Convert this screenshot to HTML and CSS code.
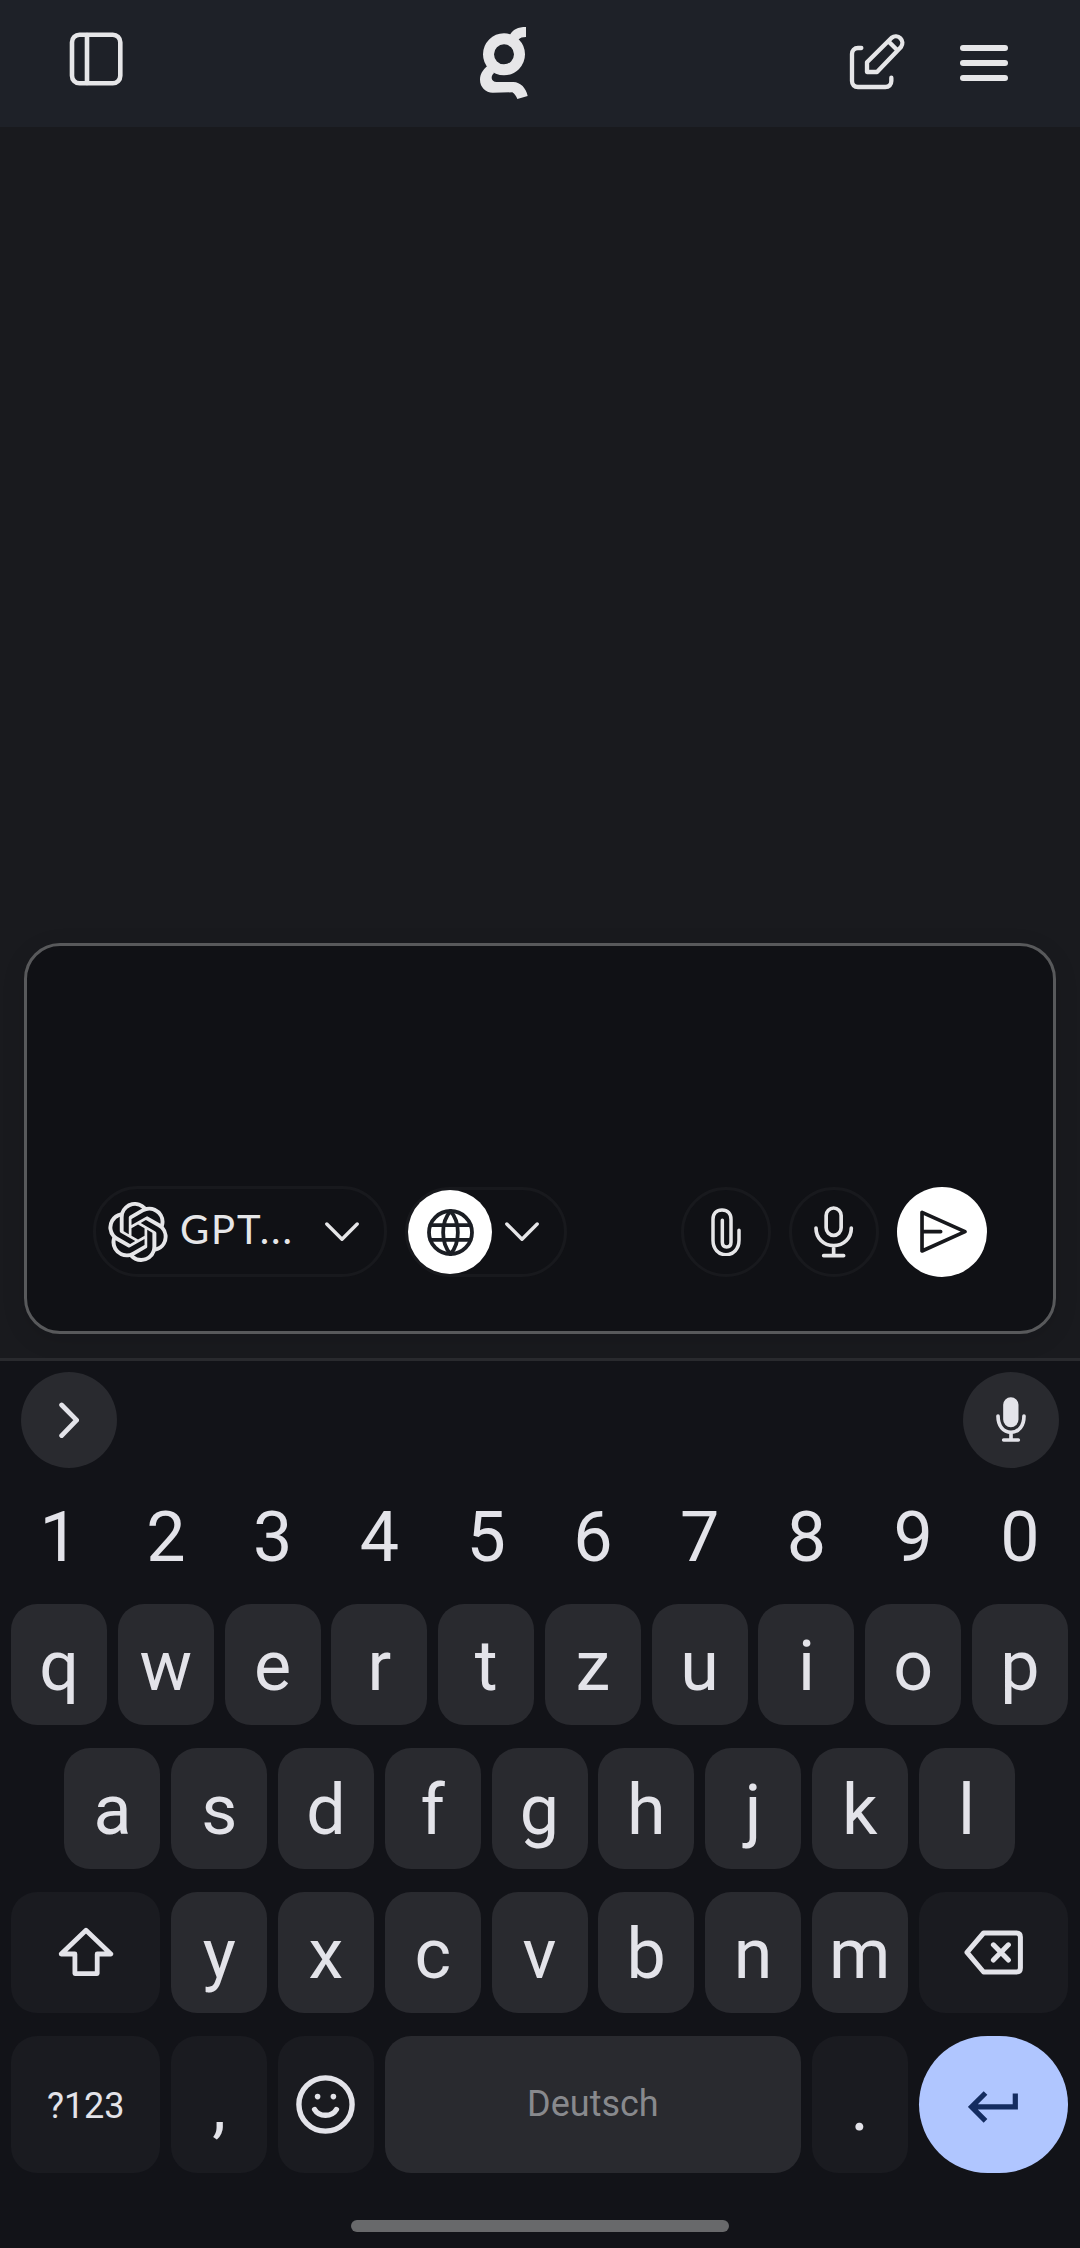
FILE: index.html
```html
<!DOCTYPE html>
<html lang="de">
<head>
<meta charset="utf-8">
<meta name="viewport" content="width=device-width, initial-scale=1">
<title>Chat</title>
<link rel="stylesheet" href="styles.css">
</head>
<body>
<div class="screen">
  <header class="topbar">
    <svg class="icon" width="54" height="54" viewBox="0 0 54 54" stroke-width="4.6"><rect x="3" y="2.8" width="48.3" height="48.4" rx="7.5"/><path d="M18 3v48"/></svg>
    <svg class="logo" width="48" height="72" viewBox="0 0 144 216">
      <circle class="ring" cx="72" cy="82" r="46.5"/>
      <path d="M90 24C98 8 114 0 138 0V30C128 30 120 32 115 38ZM22 117C8 129 0 142 0 158C0 180 17 197 38 197L97 196C104 201 109 208 112 216L143 207C138 183 122 166 100 165L50 165C41 165 35 160 35 153C35 146 38 141 43 138Z"/>
    </svg>
    <div class="topbar-actions">
      <svg class="icon" width="58" height="60" viewBox="0 0 174 180" stroke-width="13"><path d="M40 48H30C19 48 12 56 12 66V147C12 158 19 165 30 165H112C123 165 130 158 130 147V137"/><path d="M57 120V91L131 17A20 20 0 0 1 159 45L87 120ZM121 28L148 55"/></svg>
      <div class="menu"><span></span><span></span><span></span></div>
    </div>
  </header>

  <main class="chat">
    <section class="composer">
      <div class="toolbar">
        <div class="pill model">
          <svg class="model-logo" width="60" height="60" viewBox="0 0 24 24"><path d="M22.2819 9.8211a5.9847 5.9847 0 0 0-.5157-4.9108 6.0462 6.0462 0 0 0-6.5098-2.9A6.0651 6.0651 0 0 0 4.9807 4.1818a5.9847 5.9847 0 0 0-3.9977 2.9 6.0462 6.0462 0 0 0 .7427 7.0966 5.98 5.98 0 0 0 .511 4.9107 6.051 6.051 0 0 0 6.5146 2.9001A5.9847 5.9847 0 0 0 13.2599 24a6.0557 6.0557 0 0 0 5.7718-4.2058 5.9894 5.9894 0 0 0 3.9977-2.9001 6.0557 6.0557 0 0 0-.7475-7.0729zm-9.022 12.6081a4.4755 4.4755 0 0 1-2.8764-1.0408l.1419-.0804 4.7783-2.7582a.7948.7948 0 0 0 .3927-.6813v-6.7369l2.02 1.1686a.071.071 0 0 1 .038.052v5.5826a4.504 4.504 0 0 1-4.4945 4.4944zm-9.6607-4.1254a4.4708 4.4708 0 0 1-.5346-3.0137l.142.0852 4.783 2.7582a.7712.7712 0 0 0 .7806 0l5.8428-3.3685v2.3324a.0804.0804 0 0 1-.0332.0615L9.74 19.9502a4.4992 4.4992 0 0 1-6.1408-1.6464zM2.3408 7.8956a4.485 4.485 0 0 1 2.3655-1.9728V11.6a.7664.7664 0 0 0 .3879.6765l5.8144 3.3543-2.0201 1.1685a.0757.0757 0 0 1-.071 0l-4.8303-2.7865A4.504 4.504 0 0 1 2.3408 7.872zm16.5963 3.8558L13.1038 8.364 15.1192 7.2a.0757.0757 0 0 1 .071 0l4.8303 2.7913a4.4944 4.4944 0 0 1-.6765 8.1042v-5.6772a.79.79 0 0 0-.407-.667zm2.0107-3.0231l-.142-.0852-4.7735-2.7818a.7759.7759 0 0 0-.7854 0L9.409 9.2297V6.8974a.0662.0662 0 0 1 .0284-.0615l4.8303-2.7866a4.4992 4.4992 0 0 1 6.6802 4.66zM8.3065 12.863l-2.02-1.1638a.0804.0804 0 0 1-.038-.0567V6.0742a4.4992 4.4992 0 0 1 7.3757-3.4537l-.142.0805L8.704 5.459a.7948.7948 0 0 0-.3927.6813zm1.0976-2.3654l2.602-1.4998 2.6069 1.4998v2.9994l-2.5974 1.4997-2.6067-1.4997Z"/></svg>
          <span class="model-name">GPT...</span>
          <svg class="icon" width="34" height="20" viewBox="0 0 34 20" stroke-width="3.4"><path d="M1.8 2L17 17.3L32.2 2"/></svg>
        </div>
        <div class="pill web">
          <div class="web-toggle">
            <svg class="icon dark" width="47" height="47" viewBox="0 0 47 47" stroke-width="3.8"><circle cx="23.5" cy="23.5" r="21.5"/><path d="M23.5 2C13.7 13 13.7 34 23.5 45M23.5 2C33.3 13 33.3 34 23.5 45M3.5 16.1H43.5M3.5 30.8H43.5"/></svg>
          </div>
          <svg class="icon" width="34" height="20" viewBox="0 0 34 20" stroke-width="3.4"><path d="M1.8 2L17 17.3L32.2 2"/></svg>
        </div>
        <div class="round attach">
          <svg class="icon" width="30" height="48.7" viewBox="0 0 90 146" stroke-width="10.5"><path d="M84 67V97C84 123 67 140 45 140C22 140 6 123 6 97V34C6 17 16 6 33 6C50 6 60 17 60 34V103C60 112 55 117 47 117C39 117 34 112 34 103V37"/></svg>
        </div>
        <div class="round">
          <svg class="icon" width="39.3" height="52" viewBox="0 0 118 156" stroke-width="11"><rect x="36.5" y="6" width="45" height="82" rx="22.5"/><path d="M6 66C6 96 28 119 59 119C90 119 112 96 112 66M59 119V148M29 149H89"/></svg>
        </div>
        <div class="round send">
          <svg class="icon dark" width="47" height="43.3" viewBox="0 0 141 130" stroke-width="11"><path d="M6 7L135 65L6 123ZM6 65H62"/></svg>
        </div>
      </div>
    </section>
  </main>

  <section class="keyboard">
    <div class="suggest">
      <div class="bubble"><svg class="icon key-ink" width="20.3" height="36.3" viewBox="0 0 61 109" stroke-width="14.5"><path d="M8 9L53 54.5L8 101"/></svg></div>
      <div class="bubble"><svg class="icon key-ink" width="30" height="45.3" viewBox="0 0 90 136" stroke-width="11"><rect class="solid" x="27" y="6" width="35" height="79" rx="17.5"/><path d="M6 57C6 87 22 106 45 106C68 106 84 87 84 57M45 106V128M23 129H67"/></svg></div>
    </div>
    <div class="row digits">
      <span class="key">1</span><span class="key">2</span><span class="key">3</span><span class="key">4</span><span class="key">5</span><span class="key">6</span><span class="key">7</span><span class="key">8</span><span class="key">9</span><span class="key">0</span>
    </div>
    <div class="row">
      <span class="key">q</span><span class="key">w</span><span class="key">e</span><span class="key">r</span><span class="key">t</span><span class="key">z</span><span class="key">u</span><span class="key">i</span><span class="key">o</span><span class="key">p</span>
    </div>
    <div class="row">
      <span class="key">a</span><span class="key">s</span><span class="key">d</span><span class="key">f</span><span class="key">g</span><span class="key">h</span><span class="key">j</span><span class="key">k</span><span class="key">l</span>
    </div>
    <div class="row">
      <span class="key wide dim shift"><svg class="icon key-ink" width="56" height="50" viewBox="0 0 56 50" stroke-width="4.8"><path d="M28 3.2L52.8 27H39.2V46.6H16.9V27H3.2Z"/></svg></span>
      <span class="key">y</span><span class="key">x</span><span class="key">c</span><span class="key">v</span><span class="key">b</span><span class="key">n</span><span class="key">m</span>
      <span class="key wide dim backspace"><svg class="icon key-ink" width="59" height="45" viewBox="0 0 59 45" stroke-width="5"><path d="M19.6 3H52.5Q56.4 3 56.4 7V38Q56.4 42 52.5 42H19.6L3 22.4ZM29.4 14.8L44.4 30M44.4 14.8L29.4 30"/></svg></span>
    </div>
    <div class="row bottom">
      <span class="key wide dim symbols">?123</span>
      <span class="key dim">,</span>
      <span class="key dim face"><svg class="icon key-ink" width="59" height="59" viewBox="0 0 59 59" stroke-width="5.4"><circle cx="29.5" cy="29.5" r="26.6"/><path d="M18.6 34.5C23 42.2 36 42.2 40.4 34.5"/><circle class="dot" cx="21.6" cy="21.6" r="2.8"/><circle class="dot" cx="37.4" cy="21.6" r="2.8"/></svg></span>
      <span class="key space">Deutsch</span>
      <span class="key dim">.</span>
      <span class="key wide enter"><svg class="enter-icon" width="50" height="32" viewBox="0 0 50 32"><path d="M17.5 2L3.5 15.9L17.5 29.8M3.5 15.9H47.3V2.6"/></svg></span>
    </div>
    <div class="home-indicator"></div>
  </section>
</div>
</body>
</html>
```
FILE: styles.css
```css
* {
  box-sizing: border-box;
}

body {
  margin: 0;
  background: #191a1e;
  color: #e6e6e8;
  font-family: Roboto, "Liberation Sans", sans-serif;
}

svg {
  display: block;
  flex: none;
}

.screen {
  display: flex;
  flex-direction: column;
  width: 1080px;
  height: 2248px;
  overflow: hidden;
}

.icon {
  fill: none;
  stroke: #e6e6e8;
  stroke-linecap: round;
  stroke-linejoin: round;
}

.icon.dark {
  stroke: #1b1e24;
}

.icon.key-ink {
  stroke: #e3e3e9;
}

.icon .solid {
  fill: #e3e3e9;
}

.icon .dot {
  fill: #e3e3e9;
  stroke: none;
}

/* Top bar */
.topbar {
  display: grid;
  grid-template-columns: 411px 368px 1fr;
  align-items: start;
  height: 127px;
  padding: 27px 72px 0 69px;
  background: #1e2128;
}

.topbar > .icon {
  margin-top: 5px;
}

.logo {
  fill: #e6e6e8;
}

.logo .ring {
  fill: none;
  stroke: #e6e6e8;
  stroke-width: 33;
}

.topbar-actions {
  display: flex;
  justify-content: space-between;
  padding-top: 5px;
}

.menu {
  display: flex;
  flex-direction: column;
  gap: 9px;
  width: 48px;
  padding-top: 13px;
}

.menu span {
  height: 6px;
  border-radius: 3px;
  background: #e6e6e8;
}

/* Chat area with composer */
.chat {
  display: flex;
  flex-direction: column;
  justify-content: flex-end;
  height: 1231px;
  padding: 0 24px 24px;
}

.composer {
  display: flex;
  align-items: flex-end;
  height: 391px;
  padding: 0 66px 54px;
  border: 3px solid #58595b;
  border-radius: 36px;
  background: #101115;
  box-shadow: 0 6px 24px rgba(0, 0, 0, 0.1);
}

.toolbar {
  display: flex;
  flex: 1;
  align-items: flex-end;
  gap: 18px;
}

.pill {
  display: flex;
  align-items: center;
  height: 90px;
  border: 3px solid #18191d;
  border-radius: 45px;
}

.model {
  width: 294px;
  height: 91px;
  padding: 0 25px 0 12px;
}

.model-logo {
  fill: #e6e6e8;
}

.model-name {
  flex: 1;
  margin-left: 12px;
  padding-bottom: 5px;
  font-family: Lato, "Open Sans", sans-serif;
  font-size: 40px;
  line-height: 48px;
  letter-spacing: 1.9px;
}

.web {
  justify-content: space-between;
  width: 162px;
  padding-right: 25px;
}

.web-toggle {
  display: grid;
  place-items: center;
  width: 84px;
  height: 84px;
  border-radius: 50%;
  background: #fff;
}

.round {
  display: grid;
  place-items: center;
  width: 90px;
  height: 90px;
  border: 3px solid #18191d;
  border-radius: 50%;
}

.attach {
  margin-left: auto;
}

.send {
  border: 0;
  background: #fff;
}

.send .icon {
  stroke: #17181c;
  margin-left: 3px;
}

/* Keyboard */
.keyboard {
  display: flex;
  flex-direction: column;
  gap: 23px;
  height: 890px;
  padding: 0 12px 0 11px;
  border-top: 3px solid #292a2e;
  background: #121318;
}

.suggest {
  display: flex;
  justify-content: space-between;
  height: 96px;
  margin: 11px 9px -11px 10px;
}

.bubble {
  display: grid;
  place-items: center;
  width: 96px;
  height: 96px;
  border-radius: 50%;
  background: #292a2f;
}

.row {
  display: flex;
  justify-content: center;
  gap: 10.78px;
  height: 121px;
}

.key {
  display: grid;
  place-items: center;
  width: 96px;
  padding-top: 3px;
  border-radius: 26px;
  background: #292a2f;
  color: #e3e3e9;
  font-size: 70px;
  line-height: 82px;
}

.digits {
  height: 101px;
}

.digits .key {
  padding-top: 13px;
  background: none;
}

.wide {
  width: 149.4px;
}

.dim {
  background: #1a1b20;
}

.shift {
  padding: 0 0 2px;
}

.backspace {
  padding: 0;
}

.bottom {
  height: 137px;
}

.symbols {
  padding-top: 3px;
  font-size: 36px;
  line-height: 42px;
}

.face {
  padding: 0;
}

.space {
  width: 416.3px;
  padding: 0 0 1px;
  color: #88898d;
  font-size: 36px;
  line-height: 42px;
}

.enter {
  padding: 5px 0 0;
  border-radius: 68.5px;
  background: #b0c6ff;
}

.enter-icon {
  fill: none;
  stroke: #142c60;
  stroke-width: 5.2;
}

.home-indicator {
  align-self: center;
  width: 378px;
  height: 12px;
  margin-top: 24px;
  border-radius: 6px;
  background: #68696b;
}
```
